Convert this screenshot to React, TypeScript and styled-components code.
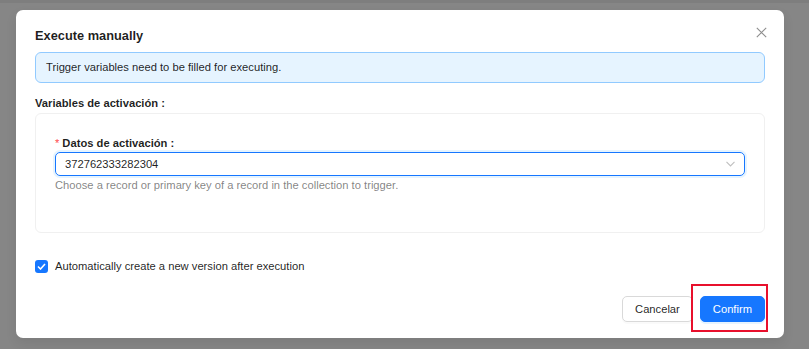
import React from "react";
import styled, { createGlobalStyle } from "styled-components";

const Global = createGlobalStyle`
  html, body { margin: 0; padding: 0; }
  body {
    font-family: "Liberation Sans", Arial, sans-serif;
    background: #868686;
  }
  * { box-sizing: border-box; }
`;

const Backdrop = styled.div`
  width: 809px;
  height: 349px;
  background: #868686;
  border-top: 3px solid #7e7e7e;
  padding: 7px 0 0 16px;
  overflow: hidden;
`;

const Modal = styled.div`
  position: relative;
  width: 768px;
  height: 328px;
  background: #fff;
  border-radius: 7px;
  box-shadow: 0 5px 12px rgba(0, 0, 0, 0.08);
  padding: 16px 19px 16px 19px;
  display: flex;
  flex-direction: column;
  color: rgba(0, 0, 0, 0.88);
  font-size: 11.2px;
`;

const Title = styled.div`
  font-size: 12.8px;
  font-weight: 700;
  line-height: 19px;
  margin-bottom: 7px;
`;

const Close = styled.button`
  position: absolute;
  top: 17px;
  right: 17px;
  width: 11px;
  height: 11px;
  padding: 0;
  border: 0;
  background: none;
  display: flex;
  align-items: center;
  justify-content: center;
`;

const Alert = styled.div`
  height: 31px;
  border: 1px solid #91caff;
  background: #e6f4ff;
  border-radius: 6px;
  padding: 0 10px;
  display: flex;
  align-items: center;
  line-height: 17px;
`;

const SectionLabel = styled.div`
  margin-top: 11px;
  margin-bottom: 1px;
  line-height: 18px;
  font-weight: 700;
`;

const Colon = styled.span`
  margin-left: 3px;
`;

const Card = styled.div`
  border: 1px solid #f0f0f0;
  border-radius: 6px;
  padding: 20px 19px 19px 19px;
  display: flex;
  flex-direction: column;
`;

const FieldLabel = styled.div`
  line-height: 18px;
  font-weight: 700;
  display: flex;
  align-items: center;
`;

const Required = styled.span`
  color: #ff4d4f;
  font-weight: 400;
  margin-right: 3px;
  font-family: SimSun, "Liberation Sans", sans-serif;
`;

const Select = styled.div`
  height: 24px;
  border: 1px solid #1677ff;
  border-radius: 5px;
  box-shadow: 0 0 0 2px rgba(5, 145, 255, 0.1);
  padding: 0 9px;
  display: flex;
  align-items: center;
  justify-content: space-between;
`;

const Help = styled.div`
  line-height: 18px;
  color: rgba(0, 0, 0, 0.5);
  margin-bottom: 19px;
`;

const CheckRow = styled.label`
  margin-top: 24px;
  height: 18px;
  display: flex;
  align-items: center;
  gap: 7px;
`;

const CheckBox = styled.span`
  width: 13px;
  height: 13px;
  border-radius: 3px;
  background: #1677ff;
  display: flex;
  align-items: center;
  justify-content: center;
`;

const Footer = styled.div`
  margin-top: 21px;
  display: flex;
  justify-content: flex-end;
  gap: 7px;
`;

const Button = styled.button<{ $primary?: boolean }>`
  height: 26px;
  padding: 0 12px;
  font-family: "Liberation Sans", Arial, sans-serif;
  font-size: 11.2px;
  border-radius: 5px;
  border: 1px solid ${(p) => (p.$primary ? "#1677ff" : "#d9d9d9")};
  background: ${(p) => (p.$primary ? "#1677ff" : "#fff")};
  color: ${(p) => (p.$primary ? "#fff" : "rgba(0,0,0,0.88)")};
  box-shadow: ${(p) =>
    p.$primary ? "0 2px 0 rgba(5,145,255,0.1)" : "0 2px 0 rgba(0,0,0,0.02)"};
`;

const Highlight = styled.span`
  position: relative;
  display: inline-flex;
`;

const RedBox = styled.span`
  position: absolute;
  top: -12px;
  left: -9px;
  right: -3px;
  bottom: -10px;
  border: 2px solid #e8102c;
  pointer-events: none;
`;

export default function App() {
  return (
    <>
      <Global />
      <Backdrop>
        <Modal>
          <Title>Execute manually</Title>
          <Close aria-label="close">
            <svg width="11" height="11" viewBox="0 0 11 11">
              <path d="M0.8 0.8 L10.2 10.2 M10.2 0.8 L0.8 10.2" stroke="rgba(0,0,0,0.45)" strokeWidth="1.1" />
            </svg>
          </Close>
          <Alert>Trigger variables need to be filled for executing.</Alert>
          <SectionLabel>
            Variables de activación<Colon>:</Colon>
          </SectionLabel>
          <Card>
            <FieldLabel>
              <Required>*</Required>Datos de activación<Colon>:</Colon>
            </FieldLabel>
            <Select>
              <span>372762333282304</span>
              <svg width="9" height="6" viewBox="0 0 9 6">
                <path d="M0.5 0.8 L4.5 5 L8.5 0.8" stroke="#bfbfbf" strokeWidth="1.1" fill="none" />
              </svg>
            </Select>
            <Help>Choose a record or primary key of a record in the collection to trigger.</Help>
          </Card>
          <CheckRow>
            <CheckBox>
              <svg width="9" height="7" viewBox="0 0 9 7">
                <path d="M1 3.5 L3.5 6 L8 1" stroke="#fff" strokeWidth="1.6" fill="none" />
              </svg>
            </CheckBox>
            <span>Automatically create a new version after execution</span>
          </CheckRow>
          <Footer>
            <Button>Cancelar</Button>
            <Highlight>
              <Button $primary>Confirm</Button>
              <RedBox />
            </Highlight>
          </Footer>
        </Modal>
      </Backdrop>
    </>
  );
}
